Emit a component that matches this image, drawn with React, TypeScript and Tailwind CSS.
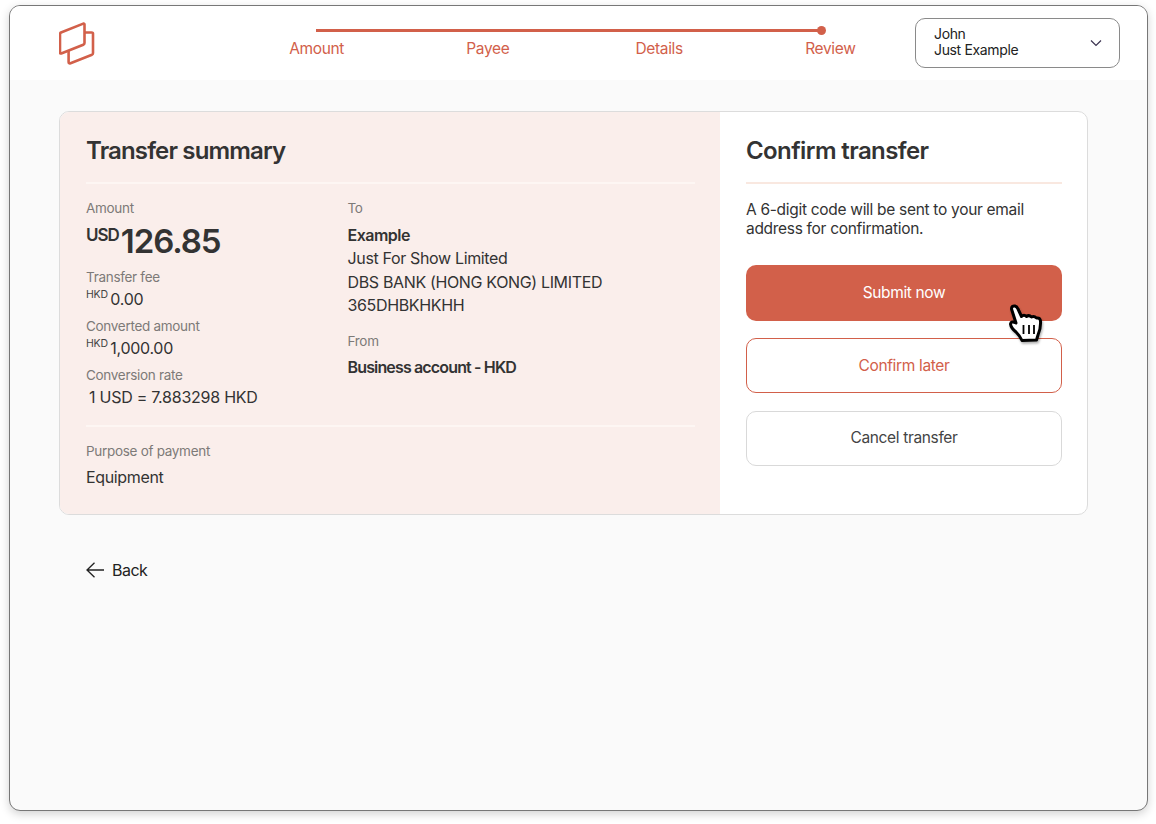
import React from "react";

const Logo = () => (
  <svg width="36" height="44" viewBox="0 0 36 44" fill="none" stroke="#d2604a" strokeWidth="2.6" strokeLinejoin="round">
    <path d="M2 10.5 L24.3 1.6 Q25.5 1.3 25.5 2.6 L25.5 21 Q25.5 22.3 24.3 22.8 L2.2 31.5 Q1 31.8 1 30.5 L1 12 Q1 11 2 10.5 Z" />
    <path d="M25.5 10.5 L32.5 10.5 Q34.3 10.5 34 12.2 L34 31 Q34 32.2 33 32.7 L11.5 41.2 Q9.6 41.8 9.6 40 L9.6 28.3" />
  </svg>
);

const Hand = () => (
  <svg width="34" height="40" viewBox="0 0 34 40" className="absolute left-[999px] top-[298px] drop-shadow-[1px_2px_1px_rgba(0,0,0,0.3)]">
    <path
      d="M2.5 5 Q2.5 1.5 6 2 Q8 2.5 9 5 L12.5 12.5 Q15 10 17.5 12.5 Q20 10.5 22.5 13 Q25 11.5 27.5 14 Q31 13.5 31.5 17 Q32 24 29 31 L27.5 36 L13 36.5 Q11 32 7 28 Q2 24 1.5 20 Q2 16.5 7 19 Z"
      fill="#fff"
      stroke="#000"
      strokeWidth="3"
      strokeLinejoin="round"
    />
    <path d="M14.5 21 V30 M20 21 V30 M25 21 V30" stroke="#000" strokeWidth="1.8" />
  </svg>
);

const Label = ({ children }: { children: React.ReactNode }) => (
  <div className="text-[13.5px] leading-[20px] text-[#7d7a78] tracking-[-0.3px]">{children}</div>
);

const Money = ({ cur, val }: { cur: string; val: string }) => (
  <div className="flex items-start leading-[22px] text-[16px] text-[#333] tracking-[-0.3px]">
    <span className="text-[10.5px] leading-[14px] mr-[2.5px] text-[#444] tracking-[-0.2px]">{cur}</span>
    <span>{val}</span>
  </div>
);

export default function App() {
  return (
    <div className="h-[824px] w-[1156px] bg-white pt-[5px] pl-[9px] pr-[8px] pb-[13px] text-[#333] [font-family:Inter,'Liberation_Sans',sans-serif] tracking-[-0.35px]">
      <div className="relative h-full w-full overflow-hidden rounded-[11px] border border-[#777] bg-[#fafafa] shadow-[0_3px_10px_rgba(0,0,0,0.18)]">
        <header className="flex h-[74px] items-start bg-white pl-[49px]">
          <div className="mt-[16px] w-[172px] shrink-0">
            <Logo />
          </div>
          <div className="w-[685px] shrink-0 pt-[23px]">
            <div className="relative ml-[85px] h-[3px] w-[506px] bg-[#d2604a]">
              <div className="absolute right-[-4px] top-[-3px] h-[9px] w-[9px] rounded-full bg-[#d2604a]" />
            </div>
            <div className="mt-[6px] grid grid-cols-4 text-center text-[15.5px] leading-[22px] text-[#d2604a]">
              <span>Amount</span>
              <span>Payee</span>
              <span>Details</span>
              <span>Review</span>
            </div>
          </div>
          <div className="mt-[12px] ml-[-1px] flex h-[50px] w-[205px] shrink-0 items-center justify-between rounded-[10px] border border-[#8a8a8a] bg-white pl-[18px] pr-[16px]">
            <div className="pb-[3px] text-[14px] leading-[16px] text-[#222]">
              <div>John</div>
              <div>Just Example</div>
            </div>
            <svg width="14" height="9" viewBox="0 0 14 9" fill="none" stroke="#3b3350" strokeWidth="1.2">
              <path d="M2 1.5 L7 6.5 L12 1.5" />
            </svg>
          </div>
        </header>

        <main className="px-[49px] pt-[31px]">
          <div className="flex h-[404px] w-[1029px] overflow-hidden rounded-[10px] border border-[#dcdcdc] bg-white">
            <section className="w-[660px] shrink-0 bg-[#faeeeb] px-[26px] pt-[23px]">
              <h2 className="text-[24px] font-semibold leading-[32px] tracking-[-0.85px]">Transfer summary</h2>
              <div className="mt-[15px] h-[2px] w-[609px] bg-[#fdf6f3]" />
              <div className="flex pt-[14px]">
                <div className="w-[261.5px] shrink-0">
                  <Label>Amount</Label>
                  <div className="mt-[3px] flex h-[31px] items-start font-semibold">
                    <span className="text-[17px] leading-[28px] tracking-[-1px]">USD</span>
                    <span className="ml-[2px] text-[33px] leading-[40px] tracking-[-1.1px]">126.85</span>
                  </div>
                  <div className="mt-[15px]">
                    <Label>Transfer fee</Label>
                    <div className="mt-px"><Money cur="HKD" val="0.00" /></div>
                  </div>
                  <div className="mt-[6px]">
                    <Label>Converted amount</Label>
                    <div className="mt-px"><Money cur="HKD" val="1,000.00" /></div>
                  </div>
                  <div className="mt-[6px]">
                    <Label>Conversion rate</Label>
                    <div className="mt-px pl-[3px] text-[16px] leading-[22px] tracking-[-0.25px]">1 USD = 7.883298 HKD</div>
                  </div>
                </div>
                <div>
                  <Label>To</Label>
                  <div className="mt-[5.9px] text-[16px] leading-[23.4px]">
                    <div className="font-semibold tracking-[-0.5px]">Example</div>
                    <div>Just For Show Limited</div>
                    <div>DBS BANK (HONG KONG) LIMITED</div>
                    <div>365DHBKHKHH</div>
                  </div>
                  <div className="mt-[13.7px]"><Label>From</Label></div>
                  <div className="mt-[5px] text-[16px] font-semibold leading-[23px] tracking-[-0.85px]">Business account - HKD</div>
                </div>
              </div>
              <div className="mt-[17px] h-[2px] w-[609px] bg-[#fdf6f3]" />
              <div className="mt-[14px]"><Label>Purpose of payment</Label></div>
              <div className="mt-[5px] text-[16px] leading-[22px]">Equipment</div>
            </section>
            <section className="flex-1 pl-[26px] pr-[25px] pt-[23px]">
              <h2 className="text-[24px] font-semibold leading-[32px] tracking-[-0.6px]">Confirm transfer</h2>
              <div className="mt-[15px] h-[2px] w-full bg-[#f9e8e0]" />
              <p className="mt-[16px] text-[15.5px] leading-[19px] tracking-[-0.3px]">
                A 6-digit code will be sent to your email address for confirmation.
              </p>
              <button className="mt-[27px] block h-[56px] w-full rounded-[10px] bg-[#d2604a] text-[15.5px] text-white">Submit now</button>
              <button className="mt-[17px] block h-[55px] w-full rounded-[10px] border border-[#d2604a] bg-white text-[15.5px] text-[#d2604a]">Confirm later</button>
              <button className="mt-[18px] block h-[55px] w-full rounded-[10px] border border-[#d9d9d9] bg-white pb-[2px] text-[15.5px] text-[#444]">Cancel transfer</button>
            </section>
          </div>
          <div className="ml-[27px] mt-[43px] flex items-center gap-[8px] text-[16px] leading-[24px] tracking-[-0.5px] text-[#222]">
            <svg width="18" height="16" viewBox="0 0 18 16" fill="none" stroke="#222" strokeWidth="1.3">
              <path d="M18 8 H1 M8.5 0.8 L1 8 L8.5 15.2" />
            </svg>
            <span>Back</span>
          </div>
        </main>
        <Hand />
      </div>
    </div>
  );
}
